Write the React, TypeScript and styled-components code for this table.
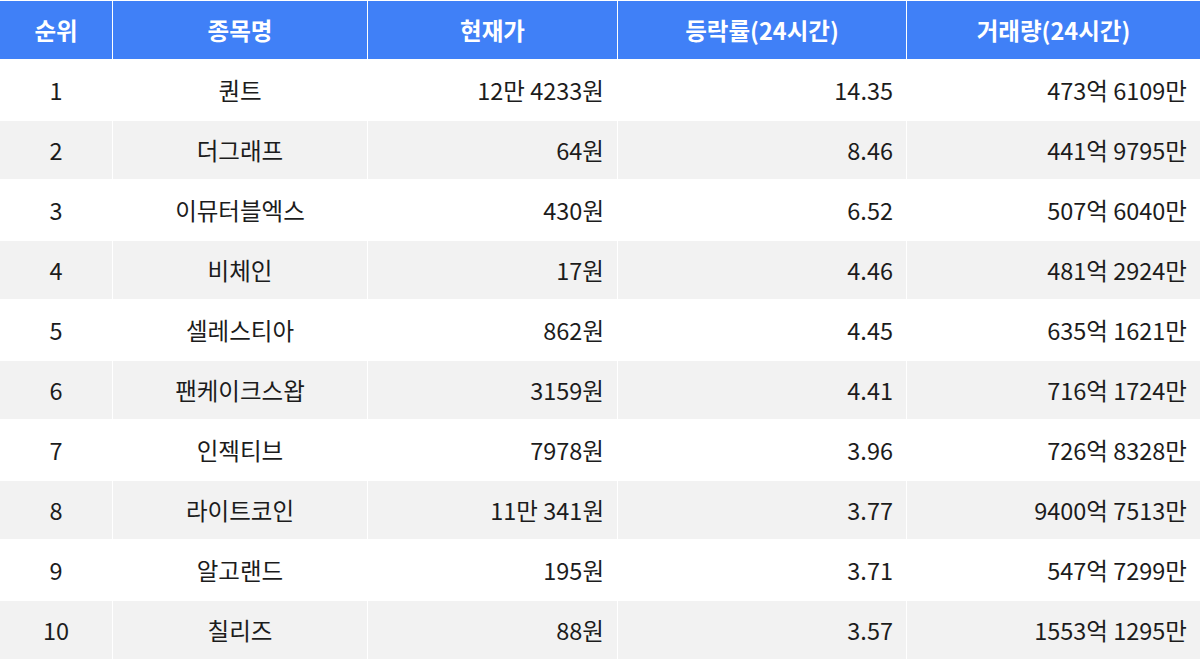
import React from "react";
import styled, { createGlobalStyle } from "styled-components";

const Global = createGlobalStyle`
  html, body { margin: 0; padding: 0; background: #ffffff; }
  body { font-family: "Noto Sans CJK KR", "Noto Sans", sans-serif; }
`;

const Table = styled.div`
  display: grid;
  width: 1200px;
  padding-top: 1px;
  grid-template-columns: 112px 254px 249px 288px 1fr;
  grid-auto-rows: 58px;
  column-gap: 1px;
  row-gap: 2px;
  background: #ffffff;
`;

const HeadCell = styled.div`
  background: #4080f7;
  color: #ffffff;
  font-weight: 700;
  font-size: 23.5px;
  display: flex;
  align-items: center;
  justify-content: center;
`;

const Cell = styled.div<{ $alt: boolean; $align: "center" | "right" }>`
  background: ${(p) => (p.$alt ? "#f2f2f2" : "#ffffff")};
  color: #1c1c1c;
  font-size: 23.5px;
  display: flex;
  align-items: center;
  justify-content: ${(p) => (p.$align === "right" ? "flex-end" : "center")};
  padding: ${(p) => (p.$align === "right" ? "0 13px 0 0" : "0")};
`;

const headers = ["순위", "종목명", "현재가", "등락률(24시간)", "거래량(24시간)"];

const rows = [
  ["1", "퀀트", "12만 4233원", "14.35", "473억 6109만"],
  ["2", "더그래프", "64원", "8.46", "441억 9795만"],
  ["3", "이뮤터블엑스", "430원", "6.52", "507억 6040만"],
  ["4", "비체인", "17원", "4.46", "481억 2924만"],
  ["5", "셀레스티아", "862원", "4.45", "635억 1621만"],
  ["6", "팬케이크스왑", "3159원", "4.41", "716억 1724만"],
  ["7", "인젝티브", "7978원", "3.96", "726억 8328만"],
  ["8", "라이트코인", "11만 341원", "3.77", "9400억 7513만"],
  ["9", "알고랜드", "195원", "3.71", "547억 7299만"],
  ["10", "칠리즈", "88원", "3.57", "1553억 1295만"],
];

const aligns: ("center" | "right")[] = ["center", "center", "right", "right", "right"];

export default function App() {
  return (
    <>
      <Global />
      <Table>
        {headers.map((h) => (
          <HeadCell key={h}>{h}</HeadCell>
        ))}
        {rows.map((r, i) =>
          r.map((v, j) => (
            <Cell key={`${i}-${j}`} $alt={i % 2 === 1} $align={aligns[j]}>
              {v}
            </Cell>
          ))
        )}
      </Table>
    </>
  );
}
